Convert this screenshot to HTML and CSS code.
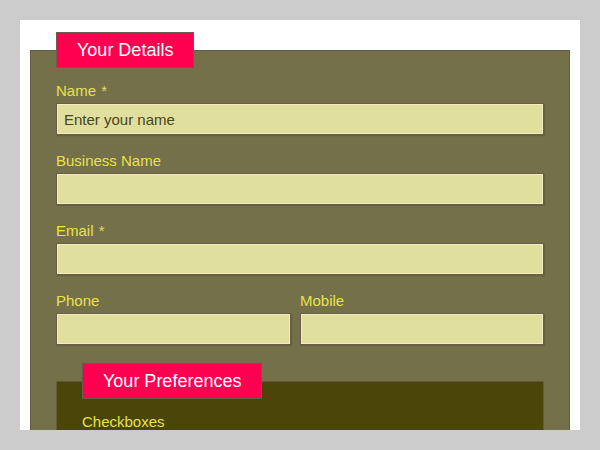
FILE: index.html
```
<!DOCTYPE html>
<html>
<head>
<meta charset="utf-8">
<link rel="stylesheet" href="styles.css">
</head>
<body>
<div class="frame">
  <form class="form">
    <fieldset class="details">
      <legend class="legend">Your Details</legend>
      <div class="row">
        <label class="label">Name <span class="req">*</span></label>
        <input class="field" type="text" placeholder="Enter your name">
      </div>
      <div class="row">
        <label class="label">Business Name</label>
        <input class="field" type="text">
      </div>
      <div class="row">
        <label class="label">Email <span class="req">*</span></label>
        <input class="field" type="text">
      </div>
      <div class="row split">
        <div class="col col-phone">
          <label class="label">Phone</label>
          <input class="field" type="text">
        </div>
        <div class="col col-mobile">
          <label class="label">Mobile</label>
          <input class="field" type="text">
        </div>
      </div>
      <fieldset class="prefs">
        <legend class="legend">Your Preferences</legend>
        <div class="row">
          <label class="label">Checkboxes</label>
        </div>
      </fieldset>
    </fieldset>
  </form>
</div>
</body>
</html>
```
FILE: styles.css
```
html, body {
  margin: 0;
  padding: 0;
  background: #cccccc;
  font-family: "Liberation Sans", Arial, sans-serif;
}
.frame {
  margin: 20px;
  width: 560px;
  height: 410px;
  box-sizing: border-box;
  padding: 12px 10px 0 10px;
  background: #ffffff;
  overflow: hidden;
}
.form {
  margin: 0;
}
.details {
  margin: 0;
  padding: 14px 25px 20px 25px;
  background: #74714a;
  border: 1px solid #635a47;
}
.legend {
  margin-left: 0;
  padding: 0 20px;
  height: 34px;
  line-height: 34px;
  background: #ff0050;
  border: 1px solid #6a5b4b;
  color: #ffffff;
  font-size: 18px;
}
.row {
  margin-bottom: 17px;
}
.label {
  display: block;
  height: 17px;
  line-height: 17px;
  margin-bottom: 4px;
  color: #e8e24a;
  font-size: 15px;
}
.req {
  color: #e2dc5a;
  padding-left: 1px;
}
.field {
  display: block;
  box-sizing: border-box;
  width: 100%;
  height: 32px;
  margin: 0;
  padding: 0 7px;
  background: #e1df9e;
  border: 1px solid #6b5c48;
  box-shadow: inset 0 0 0 1px #f0eebe, 1px 1px 1px rgba(60, 50, 30, 0.25);
  font-family: "Liberation Sans", Arial, sans-serif;
  font-size: 15px;
  color: #3c3a10;
}
.field::placeholder {
  color: #4a4620;
  opacity: 1;
}
.split {
  display: flex;
  justify-content: space-between;
}
.col-phone {
  width: 235px;
}
.col-mobile {
  width: 244px;
}
.prefs {
  margin: 18px 0 0 0;
  padding: 14px 25px 20px 25px;
  background: #4a4509;
  border: 1px solid #635a3a;
}
```
